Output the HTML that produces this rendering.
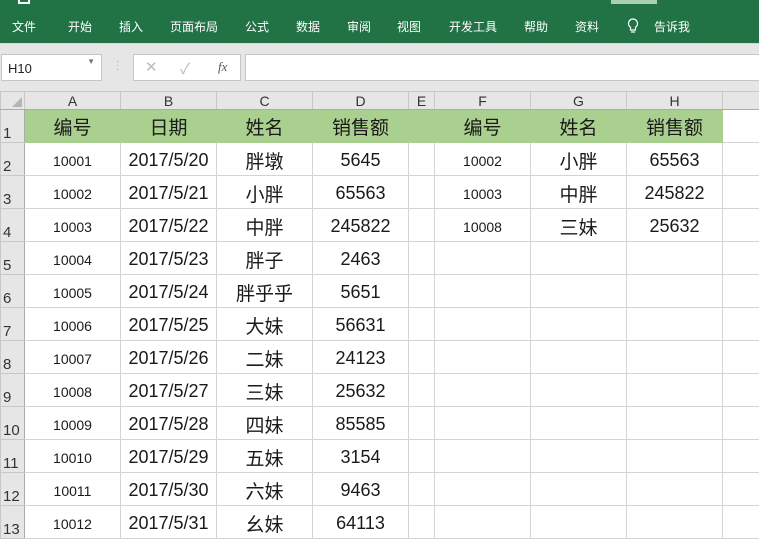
<!DOCTYPE html>
<html><head><meta charset="utf-8"><style>
*{margin:0;padding:0;box-sizing:border-box}
body{width:759px;height:538px;overflow:hidden;background:#fff;font-family:"Liberation Sans","Noto Sans CJK SC",sans-serif;position:relative}
.rib{position:absolute;left:0;top:0;width:759px;height:43px;background:#217346;color:#fff;font-size:12px}
.rib span{position:absolute;top:18px}
.fb{position:absolute;left:0;top:43px;width:759px;height:49px;background:#e6e6e6;border-top:1px solid #d4d4d4}
.box{position:absolute;background:#fff;border:1px solid #c6c6c6}
table{position:absolute;left:0;top:91px;border-collapse:collapse;table-layout:fixed;width:782px}
td{border:1px solid #d4d4d4;height:33px;text-align:center;font-size:18px;color:#1a1a1a;padding:3px 0 0;white-space:nowrap;overflow:hidden}
tr.h td{height:18px;padding:0;background:#e6e6e6;font-size:14px;color:#333;border-color:#c8c8c8;border-bottom:1px solid #ababab}
td.rh{background:#e6e6e6;font-size:15px;color:#333;text-align:left;vertical-align:bottom;padding-left:2px;border-color:#c8c8c8;border-right:1px solid #ababab}
tr.g td.c{background:#a9d08e;border-color:#a9d08e;font-size:19px;padding:0}
td.a{font-size:14px}
td.cj{font-size:19px}
</style></head><body>
<div class="rib">
<div style="position:absolute;left:611px;top:0;width:46px;height:4px;background:#a9cfb4"></div>
<div style="position:absolute;left:18px;top:0;width:12px;height:4px;border:2px solid #fff;border-top:none"></div>
<span style="left:12px">文件</span><span style="left:68px">开始</span><span style="left:119px">插入</span><span style="left:170px">页面布局</span><span style="left:245px">公式</span><span style="left:296px">数据</span><span style="left:347px">审阅</span><span style="left:397px">视图</span><span style="left:449px">开发工具</span><span style="left:524px">帮助</span><span style="left:575px">资料</span>
<svg style="position:absolute;left:627px;top:18px" width="12" height="17" viewBox="0 0 12 17"><path d="M6 1a4.5 4.5 0 0 0-2.5 8.2V12h5V9.2A4.5 4.5 0 0 0 6 1zM4 14h4" fill="none" stroke="#fff" stroke-width="1.2"/></svg>
<span style="left:654px">告诉我</span>
</div>
<div class="fb">
<div class="box" style="left:1px;top:10px;width:101px;height:27px;font-size:13px;padding:6px 0 0 6px;color:#222">H10<span style="position:absolute;right:6px;top:2px;font-size:8px;color:#777">▼</span></div>
<div style="position:absolute;left:116px;top:16px;color:#aaa;font-size:10px;line-height:4px">·<br>·<br>·</div>
<div class="box" style="left:133px;top:10px;width:108px;height:27px;color:#bbb;font-size:15px"><span style="position:absolute;left:11px;top:3px">✕</span><span style="position:absolute;left:46px;top:3px">✓</span><span style="position:absolute;left:84px;top:4px;color:#555;font-family:'Liberation Serif',serif;font-style:italic;font-size:13px">fx</span></div>
<div class="box" style="left:245px;top:10px;width:520px;height:27px"></div>
</div>
<table>
<colgroup><col style="width:24px"><col style="width:96px"><col style="width:96px"><col style="width:96px"><col style="width:96px"><col style="width:26px"><col style="width:96px"><col style="width:96px"><col style="width:96px"><col style="width:60px"></colgroup>
<tr class="h"><td style="position:relative"><svg style="position:absolute;right:2px;bottom:2px" width="10" height="10"><path d="M10 0V10H0z" fill="#b5b5b5"/></svg></td><td>A</td><td>B</td><td>C</td><td>D</td><td>E</td><td>F</td><td>G</td><td>H</td><td></td></tr>
<tr class="g"><td class="rh">1</td><td class="c">编号</td><td class="c">日期</td><td class="c">姓名</td><td class="c">销售额</td><td class="c"></td><td class="c">编号</td><td class="c">姓名</td><td class="c">销售额</td><td></td></tr>
<tr><td class="rh">2</td><td class="a">10001</td><td>2017/5/20</td><td class="cj">胖墩</td><td>5645</td><td></td><td class="a">10002</td><td class="cj">小胖</td><td>65563</td><td></td></tr>
<tr><td class="rh">3</td><td class="a">10002</td><td>2017/5/21</td><td class="cj">小胖</td><td>65563</td><td></td><td class="a">10003</td><td class="cj">中胖</td><td>245822</td><td></td></tr>
<tr><td class="rh">4</td><td class="a">10003</td><td>2017/5/22</td><td class="cj">中胖</td><td>245822</td><td></td><td class="a">10008</td><td class="cj">三妹</td><td>25632</td><td></td></tr>
<tr><td class="rh">5</td><td class="a">10004</td><td>2017/5/23</td><td class="cj">胖子</td><td>2463</td><td></td><td></td><td></td><td></td><td></td></tr>
<tr><td class="rh">6</td><td class="a">10005</td><td>2017/5/24</td><td class="cj">胖乎乎</td><td>5651</td><td></td><td></td><td></td><td></td><td></td></tr>
<tr><td class="rh">7</td><td class="a">10006</td><td>2017/5/25</td><td class="cj">大妹</td><td>56631</td><td></td><td></td><td></td><td></td><td></td></tr>
<tr><td class="rh">8</td><td class="a">10007</td><td>2017/5/26</td><td class="cj">二妹</td><td>24123</td><td></td><td></td><td></td><td></td><td></td></tr>
<tr><td class="rh">9</td><td class="a">10008</td><td>2017/5/27</td><td class="cj">三妹</td><td>25632</td><td></td><td></td><td></td><td></td><td></td></tr>
<tr><td class="rh">10</td><td class="a">10009</td><td>2017/5/28</td><td class="cj">四妹</td><td>85585</td><td></td><td></td><td></td><td></td><td></td></tr>
<tr><td class="rh">11</td><td class="a">10010</td><td>2017/5/29</td><td class="cj">五妹</td><td>3154</td><td></td><td></td><td></td><td></td><td></td></tr>
<tr><td class="rh">12</td><td class="a">10011</td><td>2017/5/30</td><td class="cj">六妹</td><td>9463</td><td></td><td></td><td></td><td></td><td></td></tr>
<tr><td class="rh">13</td><td class="a">10012</td><td>2017/5/31</td><td class="cj">幺妹</td><td>64113</td><td></td><td></td><td></td><td></td><td></td></tr>
</table>
</body></html>
